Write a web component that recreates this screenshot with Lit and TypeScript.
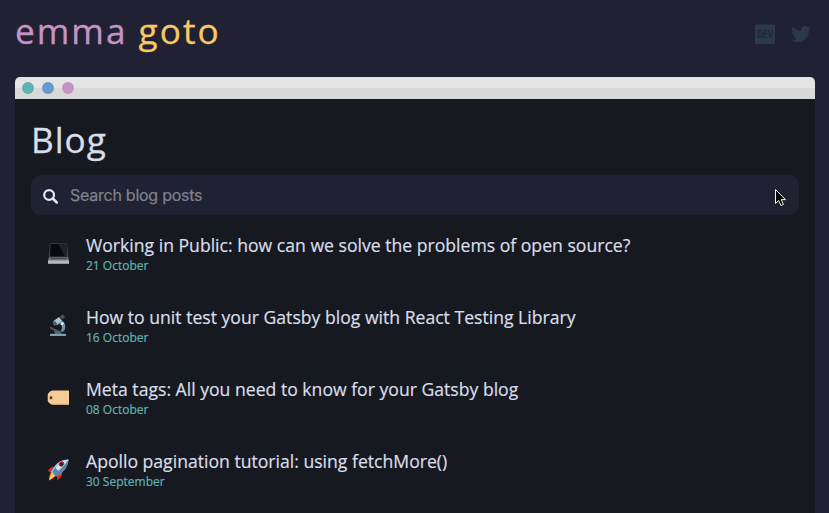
import { LitElement, html, svg, css } from "lit";
import { customElement } from "lit/decorators.js";

const laptop = svg`
  <path d="M4 1h17l1.500 16h-20z" fill="#45464d"/>
  <path d="M4.500 1.700h16.500v12.800h-17z" fill="#08090c"/>
  <path d="M12 1.700h9v12.800h-2z" fill="#202127"/>
  <path d="M3 15.500h19l1 3h-21z" fill="#77777d"/>
  <path d="M4.500 16h16v1.200h-16z" fill="#4b4b52"/>
  <path d="M2 18.300h21v3.500h-21z" fill="#b9b9bc"/>`;

const microscope = svg`
  <path d="M12 9l4-2.500 2 2c2 3 1.500 7-.5 9h-3c2-3 2-6 0-7.500z" fill="#7593a8"/>
  <path d="M14.500 2l2.500-1.500 2 2.500-2 2-2.500-1z" fill="#4a525c"/>
  <path d="M7.500 7l5.500-4 3 3.500-4.500 4.500-4-.5z" fill="#a5c5d8"/>
  <path d="M6.500 9l2.500-2 2.500 3-3 2z" fill="#555c68"/>
  <path d="M4 12.500l9 4.500-1 2-8-4.500z" fill="#55565a"/>
  <path d="M8 16.500l6 .5 2 3h-7z" fill="#58636c"/>
  <path d="M16 8l2 1-1.500 2.500-2-1z" fill="#e5eef3"/>
  <path d="M4 19.800h16v2.200h-16z" fill="#809eb2"/>`;

const tag = svg`
  <path d="M6 4.500h17v14.300H6c-2.800-1.300-4.300-3-4.300-4.500V9c0-1.500 1.500-3.200 4.300-4.500z" fill="#f5cb96"/>
  <path d="M6 18.300h17" stroke="#d9a76c" stroke-width=".7"/>
  <circle cx="5" cy="11.800" r="2" fill="#d39c62"/>
  <circle cx="5" cy="11.800" r="1.200" fill="#49303b"/>`;

const rocket = svg`
  <path d="M2 13c1-3 4-4.500 7-4l-3.500 6zM11 18l5-5c1 4-1 7-5 9z" fill="#cf3028"/>
  <path d="M5 14l5 4-2.500 2-4.500 2.500.5-5z" fill="#f36b1d"/>
  <path d="M5.500 14.500l3.500 3-6 5z" fill="#ffd85d"/>
  <path d="M5 14C9 6 14 1.500 22.500 1.500 22 9 17.500 14 10.500 18.500z" fill="#a9c7df"/>
  <path d="M7.500 16c6-3 11-8 15-14.500C22 9 17.500 14 10.500 18.500z" fill="#5685ab"/>
  <path d="M7 14c4-7 9-11 15.500-12.500-5 6-9 10-14 14z" fill="#d5e3eb"/>
  <path d="M9 9.500l-2.500 4.500 2 2 4-3z" fill="#4b86ba"/>
  <ellipse cx="15.500" cy="6" rx="2.900" ry="2.300" transform="rotate(-45 15.500 6)" fill="#b42428"/>
  <circle cx="15.400" cy="6.100" r="1.600" fill="#23232d"/>`;

const posts = [
  { icon: laptop, title: "Working in Public: how can we solve the problems of open source?", date: "21 October" },
  { icon: microscope, title: "How to unit test your Gatsby blog with React Testing Library", date: "16 October" },
  { icon: tag, title: "Meta tags: All you need to know for your Gatsby blog", date: "08 October" },
  { icon: rocket, title: "Apollo pagination tutorial: using fetchMore()", date: "30 September" },
];

@customElement("app-root")
export class AppRoot extends LitElement {
  static styles = css`
    :host {
      display: flex;
      flex-direction: column;
      position: relative;
      box-sizing: border-box;
      height: 100vh;
      padding: 0 14px 0 15px;
      overflow: hidden;
      background: #202233;
      color: #d8dee9;
      font-family: "Open Sans", sans-serif;
      -webkit-text-stroke: 0.2px currentColor;
    }
    svg { display: block; }
    header {
      display: flex;
      justify-content: space-between;
      flex: none;
      height: 77px;
    }
    .brand {
      font-size: 35.2px;
      line-height: 48px;
      letter-spacing: 2px;
      padding-top: 6px;
      color: #c594c5;
      white-space: nowrap;
    }
    .brand b { font-weight: 400; color: #fac863; -webkit-text-stroke-color: #fac863; }
    .brand, h1 { -webkit-text-stroke: 0.3px currentColor; }
    .social {
      display: flex;
      gap: 16px;
      padding: 24px 4px 0 0;
      color: #2b3a48;
      -webkit-text-stroke: 0;
    }
    .window {
      flex: 1;
      border-radius: 5px 5px 0 0;
      overflow: hidden;
      background: #171920;
    }
    .bar {
      display: flex;
      align-items: center;
      gap: 8px;
      height: 22px;
      padding-left: 7px;
      background: linear-gradient(#e4e4e4 50%, #d8d8d8 50%);
    }
    .dot { width: 12px; height: 12px; border-radius: 50%; }
    .teal { background: #5fb3b3; }
    .blue { background: #6699cc; }
    .pink { background: #c594c5; }
    .content { padding: 16px 16px 0; }
    h1 {
      margin: 0 0 12px;
      font-size: 35.2px;
      font-weight: 400;
      line-height: 48px;
      letter-spacing: 1px;
    }
    .search {
      display: flex;
      align-items: center;
      gap: 12px;
      height: 40px;
      padding-left: 12px;
      border-radius: 10px;
      background: #202233;
    }
    .placeholder {
      font: 16px/20px Inter, sans-serif;
      letter-spacing: -0.25px;
      color: #80838d;
      -webkit-text-stroke: 0.2px #80838d;
    }
    ul { list-style: none; margin: 17px 0 0; padding: 0 0 0 15px; }
    li { display: flex; gap: 14px; height: 72px; }
    .emoji { width: 26px; padding-top: 10px; }
    .title { font-size: 17.62px; line-height: 26px; white-space: nowrap; }
    .date { font-size: 12px; line-height: 16px; color: #5fb3b3; -webkit-text-stroke-color: #5fb3b3; }
    .cursor { position: absolute; left: 774px; top: 188px; }
  `;

  render() {
    return html`
      <header>
        <div class="brand">emma <b>goto</b></div>
        <div class="social">
          <svg width="20" height="21" viewBox="0 0 20 21">
            <rect y=".5" width="20" height="19.500" rx="1.500" fill="currentColor"/>
            <text x="2.500" y="13.500" textLength="15.500" lengthAdjust="spacingAndGlyphs"
              font-family="Roboto, sans-serif" font-size="10" font-weight="500" fill="#202233">DEV</text>
          </svg>
          <svg width="20" height="20" viewBox="0 0 512 512">
            <path fill="currentColor" d="M459.370 151.716c.325 4.548.325 9.097.325 13.645 0 138.720-105.583 298.558-298.558 298.558-59.452 0-114.680-17.219-161.137-47.106 8.447.974 16.568 1.299 25.340 1.299 49.055 0 94.213-16.568 130.274-44.832-46.132-.975-84.792-31.188-98.112-72.772 6.498.974 12.995 1.624 19.818 1.624 9.421 0 18.843-1.300 27.614-3.573-48.081-9.747-84.143-51.980-84.143-102.985v-1.299c13.969 7.797 30.214 12.670 47.431 13.319-28.264-18.843-46.781-51.005-46.781-87.391 0-19.492 5.197-37.360 14.294-52.954 51.655 63.675 129.300 105.258 216.365 109.807-1.624-7.797-2.599-15.918-2.599-24.040 0-57.828 46.782-104.934 104.934-104.934 30.213 0 57.502 12.670 76.670 33.137 23.715-4.548 46.456-13.320 66.599-25.340-7.798 24.366-24.366 44.833-46.132 57.827 21.117-2.273 41.584-8.122 60.426-16.243-14.292 20.791-32.161 39.308-52.628 54.253z"/>
          </svg>
        </div>
      </header>
      <main class="window">
        <div class="bar">
          <span class="dot teal"></span><span class="dot blue"></span><span class="dot pink"></span>
        </div>
        <div class="content">
          <h1>Blog</h1>
          <div class="search">
            <svg width="15" height="17" viewBox="0 0 15 17">
              <circle cx="6.100" cy="8" r="4.900" fill="none" stroke="#e2e6f0" stroke-width="2.200"/>
              <path d="M9.800 11.500l4 4" stroke="#e2e6f0" stroke-width="2.500" stroke-linecap="round"/>
            </svg>
            <span class="placeholder">Search blog posts</span>
          </div>
          <ul>
            ${posts.map((p) => html`
              <li>
                <div class="emoji"><svg width="26" height="24" viewBox="0 0 26 24">${p.icon}</svg></div>
                <div>
                  <div class="title">${p.title}</div>
                  <div class="date">${p.date}</div>
                </div>
              </li>`)}
          </ul>
        </div>
      </main>
      <svg class="cursor" width="13" height="20" viewBox="0 0 13 20">
        <path d="M1.500 1.500v14l3.200-3 2.200 5 2.500-1.100-2.100-4.800h4.200z" fill="#050505" stroke="#f2f2f2" stroke-width="1"/>
      </svg>`;
  }
}
